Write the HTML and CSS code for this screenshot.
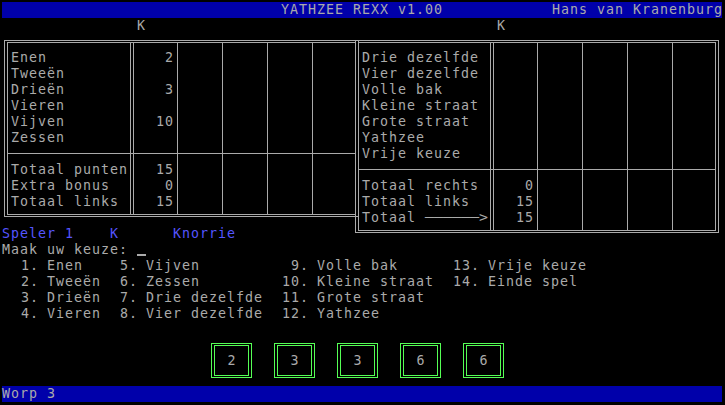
FILE: index.html
```html
<!DOCTYPE html>
<html lang="nl">
<head>
<meta charset="utf-8">
<title>YATHZEE REXX v1.00</title>
<link rel="stylesheet" href="styles.css">
</head>
<body>
<div class="screen">
  <div class="bar title">
    <span></span>
    <span>YATHZEE REXX v1.00</span>
    <span class="author">Hans van Kranenburg</span>
  </div>

  <div class="head"><span>K</span><span>K</span></div>

  <div class="tables">
    <div class="tbl tbl-left">
      <div class="tbl-inner">
        <div class="sec sec-top">
          <div class="cell lbl">
            <div class="ln">Enen</div>
            <div class="ln">Tweeën</div>
            <div class="ln">Drieën</div>
            <div class="ln">Vieren</div>
            <div class="ln">Vijven</div>
            <div class="ln">Zessen</div>
          </div>
          <div class="cell val">
            <div class="ln">2</div>
            <div class="ln"></div>
            <div class="ln">3</div>
            <div class="ln"></div>
            <div class="ln">10</div>
            <div class="ln"></div>
          </div>
          <div class="cell col"></div>
          <div class="cell col"></div>
          <div class="cell col"></div>
          <div class="cell col-last"></div>
        </div>
        <div class="sec sec-bot">
          <div class="cell lbl">
            <div class="ln">Totaal punten</div>
            <div class="ln">Extra bonus</div>
            <div class="ln">Totaal links</div>
          </div>
          <div class="cell val">
            <div class="ln">15</div>
            <div class="ln">0</div>
            <div class="ln">15</div>
          </div>
          <div class="cell col"></div>
          <div class="cell col"></div>
          <div class="cell col"></div>
          <div class="cell col-last"></div>
        </div>
      </div>
    </div>

    <div class="tbl tbl-right">
      <div class="tbl-inner">
        <div class="sec sec-top">
          <div class="cell lbl">
            <div class="ln">Drie dezelfde</div>
            <div class="ln">Vier dezelfde</div>
            <div class="ln">Volle bak</div>
            <div class="ln">Kleine straat</div>
            <div class="ln">Grote straat</div>
            <div class="ln">Yathzee</div>
            <div class="ln">Vrije keuze</div>
          </div>
          <div class="cell val"></div>
          <div class="cell col"></div>
          <div class="cell col"></div>
          <div class="cell col"></div>
          <div class="cell col-last"></div>
        </div>
        <div class="sec sec-bot">
          <div class="cell lbl">
            <div class="ln">Totaal rechts</div>
            <div class="ln">Totaal links</div>
            <div class="ln">Totaal <span class="arrow">──────&gt;</span></div>
          </div>
          <div class="cell val">
            <div class="ln">0</div>
            <div class="ln">15</div>
            <div class="ln">15</div>
          </div>
          <div class="cell col"></div>
          <div class="cell col"></div>
          <div class="cell col"></div>
          <div class="cell col-last"></div>
        </div>
      </div>
    </div>
  </div>

  <div class="player">
    <span class="p-name">Speler 1</span>
    <span class="p-init">K</span>
    <span>Knorrie</span>
  </div>

  <div class="prompt"><span>Maak uw keuze:</span><span class="cursor"></span></div>

  <div class="menu">
    <div class="menu-row">
      <span class="n">1.</span><span class="t">Enen</span>
      <span class="n">5.</span><span class="t">Vijven</span>
      <span class="n">9.</span><span class="t">Volle bak</span>
      <span class="n">13.</span><span class="t">Vrije keuze</span>
    </div>
    <div class="menu-row">
      <span class="n">2.</span><span class="t">Tweeën</span>
      <span class="n">6.</span><span class="t">Zessen</span>
      <span class="n">10.</span><span class="t">Kleine straat</span>
      <span class="n">14.</span><span class="t">Einde spel</span>
    </div>
    <div class="menu-row">
      <span class="n">3.</span><span class="t">Drieën</span>
      <span class="n">7.</span><span class="t">Drie dezelfde</span>
      <span class="n">11.</span><span class="t">Grote straat</span>
    </div>
    <div class="menu-row">
      <span class="n">4.</span><span class="t">Vieren</span>
      <span class="n">8.</span><span class="t">Vier dezelfde</span>
      <span class="n">12.</span><span class="t">Yathzee</span>
    </div>
  </div>

  <div class="dice">
    <div class="die"><div class="die-in">2</div></div>
    <div class="die"><div class="die-in">3</div></div>
    <div class="die"><div class="die-in">3</div></div>
    <div class="die"><div class="die-in">6</div></div>
    <div class="die"><div class="die-in">6</div></div>
  </div>

  <div class="bar status">Worp 3</div>
</div>
</body>
</html>
```

FILE: styles.css
```css
* {
  box-sizing: border-box;
}

html,
body {
  margin: 0;
  background: #000;
}

body {
  padding: 2px;
  width: 725px;
  height: 405px;
  overflow: hidden;
}

/* 80x25 text screen: 9px x 16px character cells */
.screen {
  width: 720px;
  height: 400px;
  display: flex;
  flex-direction: column;
  font-family: "DejaVu Sans Mono", "Liberation Mono", monospace;
  font-size: 13.3px;
  letter-spacing: 1px;
  line-height: 16px;
  color: #aaaaaa;
  white-space: nowrap;
}

.bar {
  flex: none;
  height: 16px;
  background: #0000aa;
  color: #aaaaaa;
}

.title {
  display: grid;
  grid-template-columns: 1fr auto 1fr;
}

.author {
  justify-self: end;
  margin-right: -1px;
}

.status {
  margin-top: auto;
}

.head {
  flex: none;
  height: 16px;
  display: grid;
  grid-template-columns: 360px 360px;
}

.head span {
  padding-left: 135px;
}

/* score tables */
.tables {
  flex: none;
  height: 192px;
  display: flex;
  align-items: flex-start;
  padding: 6px 0 0 2px;
}

.tbl {
  flex: none;
  border: 1px solid #aaaaaa;
  padding: 1px 2px;
}

.tbl-left {
  width: 355px;
}

.tbl-right {
  width: 364px;
  margin-left: -4px;
}

.tbl-inner {
  border: 1px solid #aaaaaa;
}

.sec {
  display: flex;
}

.sec-bot {
  border-top: 1px solid #aaaaaa;
}

.sec-top .cell {
  padding-top: 7px;
  padding-bottom: 7px;
}

.sec-bot .cell {
  padding-top: 8px;
  padding-bottom: 4px;
}

.ln {
  height: 16px;
}

.lbl {
  width: 123px;
  padding-left: 3px;
  border-right: 1px solid #aaaaaa;
}

.tbl-right .lbl {
  width: 132px;
}

/* seven character cells wide: stretch the 8px glyphs to 9px cells */
.arrow {
  display: inline-block;
  letter-spacing: 0;
  transform: scaleX(1.125);
  transform-origin: left center;
}

.val {
  width: 45px;
  margin-left: 2px;
  border-left: 1px solid #aaaaaa;
  border-right: 1px solid #aaaaaa;
  padding-right: 3px;
  text-align: right;
}

.col {
  width: 45px;
  border-right: 1px solid #aaaaaa;
}

.col-last {
  flex: 1;
}

/* player line */
.player {
  flex: none;
  height: 16px;
  display: flex;
  color: #5555ff;
}

.p-name {
  width: 108px;
}

.p-init {
  width: 63px;
}

.prompt {
  flex: none;
  height: 16px;
  display: flex;
  align-items: flex-start;
}

.cursor {
  width: 9px;
  height: 2px;
  margin-left: 9px;
  margin-top: 12px;
  background: #aaaaaa;
}

/* menu */
.menu {
  flex: none;
}

.menu-row {
  display: grid;
  grid-template-columns: 36px 81px 18px 144px 27px 144px 27px 1fr;
  height: 16px;
}

.n {
  text-align: right;
  margin-right: -1px;
}

.t {
  padding-left: 9px;
}

/* dice */
.dice {
  flex: none;
  display: flex;
  gap: 22px;
  padding-left: 209px;
  margin-top: 21px;
}

.die {
  width: 41px;
  height: 35px;
  border: 1px solid #55ff55;
  padding: 1px 2px;
}

.die-in {
  height: 100%;
  border: 1px solid #55ff55;
  display: flex;
  align-items: center;
  justify-content: center;
  padding-left: 1px;
}
```
